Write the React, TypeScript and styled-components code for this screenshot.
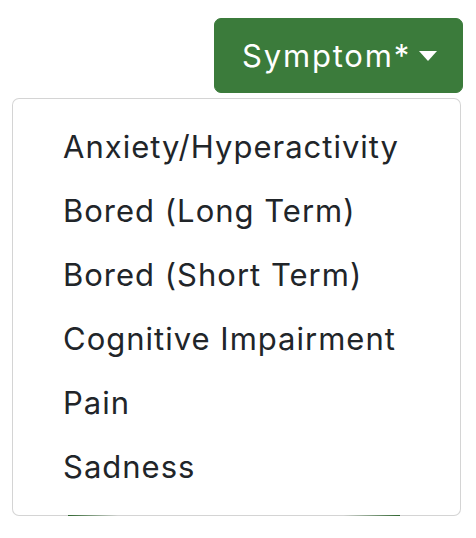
import React, { useState } from 'react';
import styled, { createGlobalStyle } from 'styled-components';

// ═══════════════════════════════════════════════════════════════════════════
// GLOBAL
// ═══════════════════════════════════════════════════════════════════════════

const GlobalStyle = createGlobalStyle`
  html, body {
    margin: 0;
    padding: 0;
    background: #ffffff;
  }
  body {
    font-family: Inter, "Noto Sans", "Liberation Sans", sans-serif;
    color: #212529;
  }
  * { box-sizing: border-box; }
`;

// ═══════════════════════════════════════════════════════════════════════════
// STYLED COMPONENTS
// ═══════════════════════════════════════════════════════════════════════════

const Page = styled.div`
  width: 476px;
  height: 538px;
  display: flex;
  flex-direction: column;
  align-items: flex-end;
  padding: 18px 13px 0 0;
  overflow: hidden;
`;

const Dropdown = styled.div`
  position: relative;
`;

const ToggleButton = styled.button`
  display: flex;
  align-items: center;
  height: 75px;
  padding: 12px 25px 12px 27px;
  background: #3b7b3b;
  border: 1px solid #3b7b3b;
  border-radius: 7px;
  color: #ffffff;
  font-family: inherit;
  font-size: 31px;
  font-weight: 400;
  letter-spacing: 1.8px;
  line-height: 48px;
  cursor: pointer;

  &::after {
    content: '';
    display: inline-block;
    margin-left: 8px;
    border-top: 10px solid #ffffff;
    border-left: 9.5px solid transparent;
    border-right: 9.5px solid transparent;
    border-bottom: 0;
  }
`;

const Menu = styled.ul`
  position: absolute;
  top: calc(100% + 5px);
  right: 2px;
  z-index: 10;
  width: 449px;
  margin: 0;
  padding: 16px 0;
  list-style: none;
  background: #ffffff;
  background-clip: padding-box;
  border: 1px solid rgba(0, 0, 0, 0.17);
  border-radius: 7px;
`;

const Item = styled.li<{ $active?: boolean }>`
  padding: 8px 0 8px 50px;
  font-size: 31px;
  letter-spacing: 1px;
  line-height: 48px;
  color: #212529;
  white-space: nowrap;
  background: ${({ $active }) => ($active ? '#f2f2f2' : 'transparent')};
  cursor: pointer;
`;

const GreenRule = styled.div`
  align-self: flex-start;
  margin: 422px 0 0 68px;
  width: 332px;
  height: 1px;
  background: linear-gradient(
    to right,
    #3b7b3b 0%,
    rgba(59, 123, 59, 0) 15%,
    rgba(59, 123, 59, 0) 83%,
    #3b7b3b 100%
  );
`;

// ═══════════════════════════════════════════════════════════════════════════
// COMPONENT
// ═══════════════════════════════════════════════════════════════════════════

const symptoms = [
  'Anxiety/Hyperactivity',
  'Bored (Long Term)',
  'Bored (Short Term)',
  'Cognitive Impairment',
  'Pain',
  'Sadness',
];

export default function App() {
  const [hovered, setHovered] = useState<number | null>(null);

  return (
    <>
      <GlobalStyle />
      <Page>
        <Dropdown>
          <ToggleButton type="button">Symptom*</ToggleButton>
          <Menu>
            {symptoms.map((s, i) => (
              <Item
                key={s}
                $active={hovered === i}
                onMouseEnter={() => setHovered(i)}
                onMouseLeave={() => setHovered(null)}
              >
                {s}
              </Item>
            ))}
          </Menu>
        </Dropdown>
        <GreenRule />
      </Page>
    </>
  );
}
